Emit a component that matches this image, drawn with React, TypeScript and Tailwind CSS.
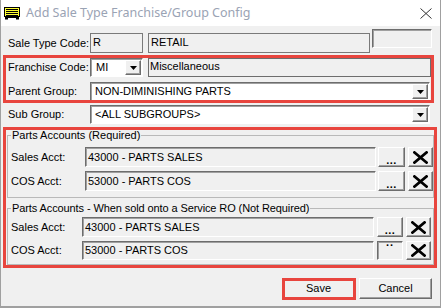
import React from "react";

const sunken =
  "border border-t-[#6d6d6d] border-l-[#6d6d6d] border-r-white border-b-white shadow-[inset_1px_1px_0_#a0a0a0]";
const raised =
  "border border-t-white border-l-white border-r-[#6d6d6d] border-b-[#6d6d6d] shadow-[inset_-1px_-1px_0_#a0a0a0]";
const pressed =
  "border border-t-[#6d6d6d] border-l-[#6d6d6d] border-r-white border-b-white shadow-[inset_1px_1px_0_#a0a0a0]";

function DropBtn() {
  return (
    <div className={`w-[16px] h-full bg-[#f0f0f0] flex items-center justify-center shrink-0 ${raised}`}>
      <svg width="7" height="4" viewBox="0 0 7 4">
        <path d="M0 0H7L3.5 4Z" fill="#000" />
      </svg>
    </div>
  );
}

function XBtn() {
  return (
    <div className={`w-[25px] h-full bg-[#f0f0f0] flex items-center justify-center shrink-0 ml-[3px] ${raised}`}>
      <svg width="15" height="13" viewBox="0 0 15 13">
        <path d="M1.5 1.5L13.5 11.5M13.5 1.5L1.5 11.5" stroke="#000" strokeWidth="2.8" strokeLinecap="square" />
      </svg>
    </div>
  );
}

function DotsBtn({ w, ml, down }: { w: string; ml: string; down?: boolean }) {
  return (
    <div
      className={`${w} ${ml} h-full bg-[#f0f0f0] flex justify-center shrink-0 font-bold ${
        down ? `items-start ${pressed}` : `items-end pb-[2px] ${raised}`
      }`}
    >
      {down ? (
        <span className="leading-[6px] -mt-[3px] tracking-[1px]">..</span>
      ) : (
        <span className="leading-[8px] tracking-[0.5px]">...</span>
      )}
    </div>
  );
}

function AcctRow({
  label,
  value,
  labelW,
  inputW,
  mt,
  h,
  dotsW,
  dotsMl,
  down,
}: {
  label: string;
  value: string;
  labelW: string;
  inputW: string;
  mt: string;
  h: string;
  dotsW: string;
  dotsMl: string;
  down?: boolean;
}) {
  return (
    <div className={`flex items-center ${mt} ${h}`}>
      <div className={`${labelW} shrink-0`}>{label}</div>
      <div className={`${inputW} h-full bg-[#f0f0f0] flex items-center pl-[2px] shrink-0 ${sunken}`}>{value}</div>
      <DotsBtn w={dotsW} ml={dotsMl} down={down} />
      <XBtn />
    </div>
  );
}

export default function App() {
  return (
    <div className="w-[441px] h-[308px] relative overflow-hidden flex flex-col bg-[#f0f0f0] border-l border-r border-b-2 border-[#a0a0a0] font-['Liberation_Sans',Arial,sans-serif] text-[11px] text-black leading-none">
      {/* Title bar */}
      <div className="h-[26px] bg-white flex items-center shrink-0">
        <svg className="ml-[3px] shrink-0" width="16" height="13" viewBox="0 0 16 13">
          <rect x="0.5" y="0.5" width="15" height="9" fill="#ffff33" stroke="#000" />
          <path d="M2 2.5H14M2 4.5H14M2 6.5H14M2 8.5H14" stroke="#000" strokeWidth="1" />
          <path d="M1 10H15V12.5H12V11H4V12.5H1Z" fill="#000" />
        </svg>
        <span className="ml-[6px] text-[12.5px] text-[#9aa3b4] font-['Noto_Sans',sans-serif]">
          Add Sale Type Franchise/Group Config
        </span>
        <svg className="ml-auto mr-[8px]" width="12" height="11" viewBox="0 0 12 11">
          <path d="M0.5 0.5L11.5 10.5M11.5 0.5L0.5 10.5" stroke="#333" strokeWidth="1" />
        </svg>
      </div>

      {/* Body */}
      <div className="flex flex-col pl-[6px]">
        {/* Sale Type Code */}
        <div className="flex items-center mt-[7px] h-[20px]">
          <div className="w-[83px] pl-[1px] shrink-0">Sale Type Code:</div>
          <div className="w-[53px] h-full bg-[#f0f0f0] border border-[#7a7a7a] flex items-start pt-[3px] pl-[2px] shrink-0">R</div>
          <div className="w-[222px] ml-[5px] h-full bg-[#f0f0f0] border border-[#7a7a7a] flex items-start pt-[3px] pl-[2px] shrink-0">RETAIL</div>
          <div className={`w-[60px] ml-[2px] h-[19px] self-start -mt-[4px] bg-[#f0f0f0] shrink-0 ${sunken}`}></div>
        </div>

        {/* Franchise Code */}
        <div className="flex items-center mt-[5px] h-[19px]">
          <div className="w-[83px] pl-[1px] shrink-0">Franchise Code:</div>
          <div className={`w-[53px] h-full bg-white flex items-center justify-between pl-[5px] pr-[1px] py-[1px] shrink-0 ${sunken}`}>
            <span>MI</span>
            <DropBtn />
          </div>
          <div className="w-[283px] ml-[5px] h-full bg-[#f0f0f0] border border-[#6d6d6d] flex items-start pt-[2px] pl-[1px] shrink-0">
            Miscellaneous
          </div>
        </div>

        {/* Parent Group */}
        <div className="flex items-center mt-[5px] h-[19px]">
          <div className="w-[83px] pl-[1px] shrink-0">Parent Group:</div>
          <div className={`w-[340px] h-full bg-white flex items-center justify-between pl-[4px] pr-[1px] py-[1px] shrink-0 ${sunken}`}>
            <span>NON-DIMINISHING PARTS</span>
            <DropBtn />
          </div>
        </div>

        {/* Sub Group */}
        <div className="flex items-center mt-[4px] h-[19px]">
          <div className="w-[83px] pl-[1px] shrink-0">Sub Group:</div>
          <div className={`w-[340px] h-full bg-white flex items-center justify-between pl-[4px] pr-[1px] py-[1px] shrink-0 ${sunken}`}>
            <span>&lt;ALL SUBGROUPS&gt;</span>
            <DropBtn />
          </div>
        </div>

        {/* Group 1 */}
        <fieldset className="mt-[5px] w-[427px] min-w-0 border border-[#b9b9b9] pl-[3px] pr-0 pb-[6px]">
          <legend className="px-[1px] leading-[13px]">Parts Accounts (Required)</legend>
          <AcctRow label="Sales Acct:" value="43000 - PARTS SALES" labelW="w-[74px]" inputW="w-[291px]" mt="mt-[5px]" h="h-[20px]" dotsW="w-[27px]" dotsMl="ml-[2px]" />
          <AcctRow label="COS Acct:" value="53000 - PARTS COS" labelW="w-[74px]" inputW="w-[291px]" mt="mt-[4px]" h="h-[20px]" dotsW="w-[27px]" dotsMl="ml-[2px]" />
        </fieldset>

        {/* Group 2 */}
        <fieldset className="mt-[4px] w-[427px] min-w-0 border border-[#b9b9b9] pl-[3px] pr-0 pb-[4px]">
          <legend className="px-[1px] leading-[13px] tracking-[-0.1px]">
            Parts Accounts - When sold onto a Service RO (Not Required)
          </legend>
          <AcctRow label="Sales Acct:" value="43000 - PARTS SALES" labelW="w-[71px]" inputW="w-[292px]" mt="mt-[2px]" h="h-[20px]" dotsW="w-[26px]" dotsMl="ml-[3px]" />
          <AcctRow label="COS Acct:" value="53000 - PARTS COS" labelW="w-[71px]" inputW="w-[292px]" mt="mt-[4px]" h="h-[19px]" dotsW="w-[26px]" dotsMl="ml-[3px]" down />
        </fieldset>

        {/* Buttons */}
        <div className="flex justify-end pr-[8px] mt-[13px]">
          <div className={`w-[73px] h-[21px] bg-[#f0f0f0] flex items-center justify-center ${raised}`}>Save</div>
          <div className={`w-[73px] h-[21px] ml-[4px] bg-[#f0f0f0] flex items-center justify-center ${raised}`}>Cancel</div>
        </div>
      </div>

      {/* Red highlight overlays */}
      <div className="absolute left-[2px] top-[55px] w-[431px] h-[48px] border-[3px] border-[#e8453e] pointer-events-none" />
      <div className="absolute left-[2px] top-[127px] w-[434px] h-[141px] border-[3px] border-[#e8453e] pointer-events-none" />
      <div className="absolute left-[281px] top-[278px] w-[74px] h-[22px] border-[3px] border-[#e8453e] pointer-events-none" />
    </div>
  );
}
